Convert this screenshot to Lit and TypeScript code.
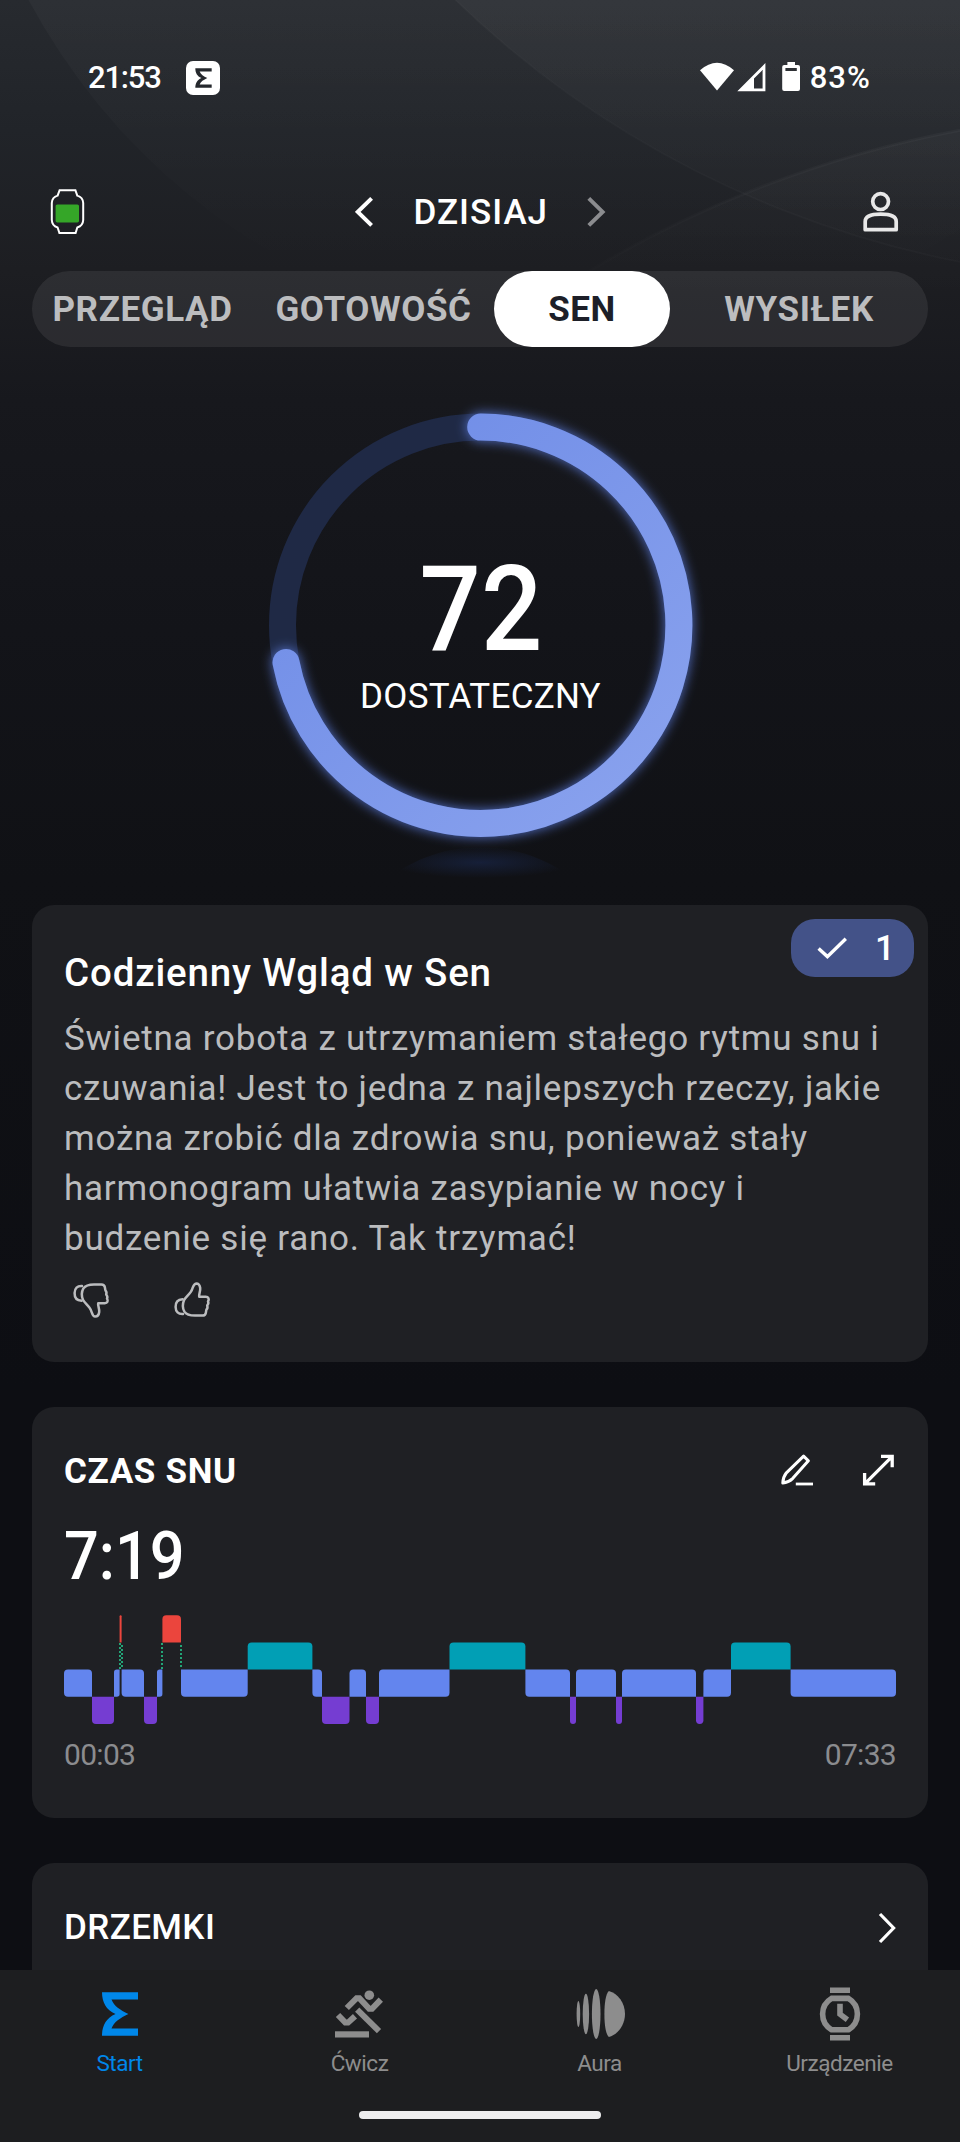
import { LitElement, html, svg, css } from "lit";
import { customElement, property } from "lit/decorators.js";
import { classMap } from "lit/directives/class-map.js";

type Stage = "awake" | "rem" | "light" | "deep";
interface Segment { stage: Stage; start: number; end: number; }

const LEVEL: Record<Stage, number> = { awake: 0, rem: 1, light: 2, deep: 3 };
const COLOR: Record<Stage, string> = { awake: "#eb453d", rem: "#019fb5", light: "#6385ee", deep: "#753dd2" };

const run = (start: number, ...parts: [Stage, number][]): Segment[] => {
  let from = start;
  return parts.map(([stage, end]) => {
    const seg = { stage, start: from, end };
    from = end;
    return seg;
  });
};

const NIGHT = run(0,
  ["light", 28], ["deep", 50], ["light", 55.6], ["awake", 57.6], ["light", 80], ["deep", 93],
  ["light", 98.4], ["awake", 117], ["light", 183.7], ["rem", 248.4], ["light", 258], ["deep", 285.5],
  ["light", 302], ["deep", 315], ["light", 385.5], ["rem", 461.4], ["light", 506], ["deep", 512],
  ["light", 552], ["deep", 558], ["light", 632], ["deep", 639.4], ["light", 667], ["rem", 726.6], ["light", 832]);

@customElement("sleep-chart")
export class SleepChart extends LitElement {
  @property({ attribute: false }) segments: Segment[] = [];
  static styles = css`
    :host { display: block; }
    .chart { display: block; width: 832px; height: 109px; }
  `;

  private block(seg: Segment, i: number) {
    const row = 27.2;
    const top = LEVEL[seg.stage] * row + 0.2;
    const x0 = seg.start, x1 = seg.end, y0 = top, y1 = top + row;
    const r = Math.min(4, (x1 - x0) / 2);
    const corner = (n: Segment | undefined, upper: boolean) => {
      if (!n) return r;
      const above = LEVEL[n.stage] < LEVEL[seg.stage];
      return above === upper ? 0 : r;
    };
    const prev = this.segments[i - 1], next = this.segments[i + 1];
    const tl = corner(prev, true), bl = corner(prev, false);
    const tr = corner(next, true), br = corner(next, false);
    return svg`<path fill=${COLOR[seg.stage]} d="M${x0 + tl} ${y0}H${x1 - tr}Q${x1} ${y0} ${x1} ${y0 + tr}V${y1 - br}Q${x1} ${y1} ${x1 - br} ${y1}H${x0 + bl}Q${x0} ${y1} ${x0} ${y1 - bl}V${y0 + tl}Q${x0} ${y0} ${x0 + tl} ${y0}Z"/>`;
  }

  private dots(x: number, shift: number) {
    return svg`<line x1=${x} x2=${x} y1=${28 + shift} y2="54" stroke="#22a577" stroke-width="2" stroke-dasharray="2 2"/>`;
  }

  render() {
    return html`<svg class="chart" viewBox="0 0 832 109">
      ${this.segments.map((s, i) => this.block(s, i))}
      ${this.dots(56, 0)}${this.dots(58, 2)}${this.dots(98, 0)}${this.dots(117, 2)}
    </svg>`;
  }
}

@customElement("score-ring")
export class ScoreRing extends LitElement {
  @property({ type: Number }) score = 0;
  @property() label = "";
  static styles = css`
    :host { display: grid; justify-content: center; height: 558px; }
    .dial, .text { grid-area: 1 / 1; }
    .dial { display: block; width: 480px; height: 558px; }
    .text { display: flex; flex-direction: column; align-items: center; padding-top: 204px; color: #fff; }
    .score { padding-left: 3px; font-size: 118px; line-height: 118px; font-weight: 500; transform: scaleX(0.915); }
    .label { margin-top: 6px; padding-left: 1px; font-size: 35px; line-height: 44px; letter-spacing: 0.25px; }
  `;
  render() {
    const r = 198.2, cx = 240.7, cy = 278.3;
    const a = (this.score / 100) * 2 * Math.PI;
    const ex = cx + r * Math.sin(a), ey = cy - r * Math.cos(a);
    const arc = `M${cx} ${cy - r}A${r} ${r} 0 1 1 ${ex} ${ey}`;
    return html`
      <svg class="dial" viewBox="0 0 480 558">
        <defs>
          <linearGradient id="arc" gradientUnits="userSpaceOnUse" x1="90" y1="120" x2="390" y2="430">
            <stop offset="0" stop-color="#708de7"/><stop offset="1" stop-color="#87a0ed"/>
          </linearGradient>
          <radialGradient id="pool"><stop offset="0" stop-color="#182444" stop-opacity=".75"/><stop offset="1" stop-color="#182444" stop-opacity="0"/></radialGradient>
          <filter id="glow" x="-20%" y="-20%" width="140%" height="140%"><feGaussianBlur stdDeviation="6"/></filter>
        </defs>
        <path d="M148 531C175 512 205 500 240.7 500S306 512 333 531Z" fill="url(#pool)"/>
        <circle cx=${cx} cy=${cy} r=${r} fill="none" stroke="#1f2945" stroke-width="27"/>
        <path d=${arc} fill="none" stroke="#5f80e6" stroke-opacity=".8" stroke-width="28" stroke-linecap="round" filter="url(#glow)"/>
        <path d=${arc} fill="none" stroke="url(#arc)" stroke-width="27" stroke-linecap="round"/>
      </svg>
      <div class="text"><div class="score">${this.score}</div><div class="label">${this.label}</div></div>`;
  }
}

const sigma = (cls: string) => html`<svg class=${cls} viewBox="102 1992 36 44"><path fill="currentColor" d="M102 1992.3H138V1999.5H111.5C114 2006 120 2010 128.4 2014C120 2018 114 2022 111.5 2028.5H138V2035.7H102C102 2026 106 2018 115.5 2014C106 2010 102 2002 102 1992.3Z"/></svg>`;

const runner = html`<svg class="nav-icon" viewBox="332 1986 56 56" fill="none" stroke="currentColor" stroke-width="6">
  <circle cx="369.3" cy="1995.2" r="4.8" fill="currentColor" stroke="none"/>
  <path d="M346.8 2008L356.6 1998.2H359.4L369.2 2008.8H372L380.8 1999.6"/>
  <path d="M357.2 2009.6L379 2031.2"/>
  <path d="M338 2015L345.3 2022.6H348L355 2016.2"/>
  <rect x="335" y="2031.3" width="34" height="6.2" fill="currentColor" stroke="none"/></svg>`;

const aura = html`<svg class="nav-icon" viewBox="572 1986 56 56" fill="currentColor">
  <ellipse cx="578.4" cy="2014" rx="1.8" ry="13"/><ellipse cx="585.9" cy="2014" rx="3.2" ry="20.3"/><ellipse cx="596.2" cy="2014" rx="4.3" ry="25"/>
  <path d="M608.8 1991C618 1993.5 625 2003 625 2014S618 2034.5 608.8 2037C605.6 2034 604.4 2024 604.4 2014S605.6 1994 608.8 1991Z"/></svg>`;

const watch = html`<svg class="nav-icon" viewBox="812 1986 56 56" fill="none" stroke="currentColor" stroke-width="5.6">
  <path d="M830 1990.3H850M830 2037.8H850"/>
  <path d="M831.6 1998.4H848.4A18.2 18.2 0 0 1 848.4 2029.8H831.6A18.2 18.2 0 0 1 831.6 1998.4Z"/>
  <path d="M840 2003.8V2014.2L847.4 2019.8"/></svg>`;

const TABS = [
  { text: "PRZEGLĄD", on: false }, { text: "GOTOWOŚĆ", on: false },
  { text: "SEN", on: true }, { text: "WYSIŁEK", on: false },
];

@customElement("app-root")
export class AppRoot extends LitElement {
  static styles = css`
    :host { display: block; width: 960px; height: 2142px; overflow: hidden; font-family: Roboto, "Noto Sans", sans-serif; color: #fff; }
    svg { display: block; flex: none; }
    .screen { position: relative; display: flex; flex-direction: column; width: 960px; height: 2142px; overflow: hidden;
      background: linear-gradient(180deg, #272a2f 0, #212429 130px, #1d1e22 270px, #17181d 400px, #131419 630px, #101115 880px, #0d0e13 1390px, #0d0e13 100%); }
    .arcs { position: absolute; inset: 0 auto auto 0; width: 960px; height: 360px; }
    .content { position: relative; display: flex; flex-direction: column; height: 1970px; overflow: hidden; }
    .status { display: flex; align-items: center; height: 154px; padding: 0 89px 0 88px; flex: none; }
    .clock { padding-top: 2px; font-size: 31px; line-height: 36px; font-weight: 500; letter-spacing: -1.2px; width: 98px; }
    .chip { display: grid; place-items: center; width: 34px; height: 34px; margin-top: 2px; border-radius: 7px; background: #fff; color: #25282d; }
    .sys { display: flex; align-items: center; margin-left: auto; }
    .pct { padding-top: 2px; font-size: 31px; line-height: 36px; font-weight: 500; letter-spacing: 1.1px; }
    .top { display: grid; grid-template-columns: 1fr auto 1fr; align-items: center; height: 115px; margin-bottom: 2px; padding: 0 49px 0 50px; flex: none; }
    .day { display: flex; align-items: center; }
    .date { width: 134px; margin: 0 39px; padding-top: 2px; font-size: 35px; line-height: 44px; font-weight: 500; letter-spacing: 1px; white-space: nowrap; }
    .me { justify-self: end; margin-right: 12px; }
    .tabs { display: grid; grid-template-columns: 221px 241px 176px 258px; height: 76px; margin: 0 32px; border-radius: 38px; background: rgba(255,255,255,.075); flex: none; }
    .tab { display: grid; place-items: center; padding-top: 2px; border-radius: 38px; font-size: 35px; line-height: 44px; font-weight: 700; letter-spacing: 0.6px; color: #bcbdbf; }
    .tab.on { background: #fff; color: #1d1f28; }
    .card { position: relative; flex: none; margin: 0 32px; padding: 0 32px; border-radius: 22px; background: #1f2024; }
    .insight { height: 457px; box-sizing: border-box; padding-top: 44px; }
    .insight-title { font-size: 38.5px; line-height: 48px; font-weight: 500; letter-spacing: 0.84px; }
    .insight-text { margin: 17px 0 0; font-size: 35px; line-height: 50px; letter-spacing: 0.77px; color: #bbbcbe; white-space: nowrap; }
    .votes { display: flex; gap: 61px; margin: 16px 0 0 6px; }
    .badge { position: absolute; top: 14px; right: 14px; box-sizing: border-box; display: flex; align-items: center; width: 123px; height: 58px; padding-left: 26px; border-radius: 24px; background: #435288; }
    .count { margin-left: 28px; padding-top: 2px; font-size: 35px; line-height: 44px; font-weight: 500; }
    .sleep { height: 411px; box-sizing: border-box; margin-top: 45px; padding-top: 42px; }
    .naps { height: 411px; box-sizing: border-box; margin-top: 45px; padding-top: 42px; }
    .row { display: flex; align-items: center; height: 44px; }
    .heading { padding-top: 2px; font-size: 35px; line-height: 44px; font-weight: 700; letter-spacing: 0.66px; }
    .heading.medium { font-weight: 500; letter-spacing: 0.4px; }
    .tools { display: flex; gap: 46px; margin-left: auto; }
    .go { margin-left: auto; }
    .duration { margin-top: 28px; font-size: 67px; line-height: 70px; font-weight: 500; transform: scaleX(.915); transform-origin: left; }
    .chart { margin-top: 24px; }
    .times { display: flex; justify-content: space-between; margin-top: 13px; font-size: 30px; line-height: 36px; letter-spacing: -0.7px; color: #8b8c8f; }
    .nav { position: relative; height: 172px; box-sizing: border-box; padding-top: 16px; background: #1d1e20; }
    .items { display: grid; grid-template-columns: repeat(4, 1fr); }
    .item { display: flex; flex-direction: column; align-items: center; color: #8d8d8d; }
    .item.on { color: #0087e9; }
    .nav-icon { width: 56px; height: 56px; }
    .slot { display: grid; place-items: center; height: 56px; }
    .sigma { width: 36px; height: 44px; }
    .mini { width: 17px; height: 20px; }
    .caption { margin-top: 7px; padding-right: 1px; font-size: 22.5px; line-height: 28px; letter-spacing: -0.45px; }
    .handle { width: 242px; height: 8px; margin: 34px auto 0; border-radius: 4px; background: #ededee; }
  `;

  render() {
    return html`<div class="screen">
      <svg class="arcs" viewBox="0 0 960 360" fill="none">
        <defs>
          <linearGradient id="f1" gradientUnits="userSpaceOnUse" x1="0" y1="0" x2="0" y2="270"><stop offset="0" stop-color="#fff" stop-opacity=".03"/><stop offset="1" stop-color="#fff" stop-opacity="0"/></linearGradient>
          <linearGradient id="f2" gradientUnits="userSpaceOnUse" x1="0" y1="0" x2="0" y2="290"><stop offset="0" stop-color="#fff" stop-opacity=".035"/><stop offset="1" stop-color="#fff" stop-opacity="0"/></linearGradient>
          <linearGradient id="f3" gradientUnits="userSpaceOnUse" x1="0" y1="130" x2="0" y2="300"><stop offset="0" stop-color="#fff" stop-opacity=".03"/><stop offset="1" stop-color="#fff" stop-opacity="0"/></linearGradient>
        </defs>
        <circle cx="597" cy="-304" r="644.6" fill="url(#f1)"/>
        <circle cx="1151" cy="-724" r="1004" fill="url(#f2)" stroke="#fff" stroke-opacity=".02" stroke-width="2"/>
        <circle cx="1168" cy="1238" r="1127" fill="url(#f3)" stroke="url(#f3)" stroke-width="3"/>
      </svg>

      <div class="content">
        <div class="status">
          <div class="clock">21:53</div>
          <div class="chip">${sigma("mini")}</div>
          <div class="sys">
            <svg width="110" height="34" viewBox="700 60 110 34" fill="#fff">
              <path d="M700 70.2Q717 55.2 734 70.2L717 90.6Z"/>
              <path fill-rule="evenodd" d="M765.4 63V91.3H737.3ZM754 78.6V88.4H762.6V70Z"/>
              <path fill-rule="evenodd" d="M787.4 62H795V65H798Q800 65 800 67V89Q800 91 798 91H784.2Q782.2 91 782.2 89V67Q782.2 65 784.2 65H787.4ZM785.4 68V71H796.8V68Z"/>
            </svg>
            <div class="pct">83%</div>
          </div>
        </div>

        <div class="top">
          <svg width="35" height="46" viewBox="50 190 35 46" fill="none">
            <path d="M59.6 191.2H75.4L77.3 196.6Q83 198.3 83.2 204V221Q83 226.7 77.3 228.5L75.6 234H59.4L57.6 228.5Q52 226.7 51.8 221V204Q52 198.3 57.6 196.6Z" stroke="#fff" stroke-width="2"/>
            <rect x="55.6" y="205.4" width="23.4" height="18" rx="1.6" fill="#35a628"/>
          </svg>
          <div class="day">
            <svg width="20" height="34" viewBox="356 195 20 34" fill="none" stroke="#fff" stroke-width="4"><path d="M372.6 198.4L358.8 211.9L372.6 225.4"/></svg>
            <div class="date">DZISIAJ</div>
            <svg width="20" height="34" viewBox="587 195 20 34" fill="none" stroke="#8b8c8f" stroke-width="4"><path d="M588.8 198.4L602.6 211.9L588.8 225.4"/></svg>
          </div>
          <svg class="me" width="36" height="42" viewBox="864 191 36 42" fill="none" stroke="#e8e8e8" stroke-width="3.7">
            <circle cx="881.6" cy="201.6" r="7.9"/>
            <path stroke-linejoin="round" d="M866.2 229.7V221.6Q866.2 214.2 881.7 214.2T897.2 221.6V229.7Z"/>
          </svg>
        </div>

        <div class="tabs">${TABS.map(t => html`<div class=${classMap({ tab: true, on: t.on })}>${t.text}</div>`)}</div>

        <score-ring score="72" label="DOSTATECZNY"></score-ring>

        <div class="card insight">
          <div class="badge">
            <svg width="30" height="24" viewBox="817 936 30 24" fill="none" stroke="#fff" stroke-width="3.4"><path d="M818.6 948.6L827.4 956.6L845.8 938.8"/></svg>
            <div class="count">1</div>
          </div>
          <div class="insight-title">Codzienny Wgląd w Sen</div>
          <p class="insight-text">Świetna robota z utrzymaniem stałego rytmu snu i<br>czuwania! Jest to jedna z najlepszych rzeczy, jakie<br>można zrobić dla zdrowia snu, ponieważ stały<br>harmonogram ułatwia zasypianie w nocy i<br>budzenie się rano. Tak trzymać!</p>
          <div class="votes">
            ${[false, true].map(up => html`<svg width="40" height="40" viewBox="70 1280 40 40" fill="none" stroke="#bbbcbe" stroke-width="2.5" stroke-linejoin="round" stroke-linecap="round">
              <g transform=${up ? "translate(0 2600) scale(1 -1)" : "translate(0 0)"}>
                <path d="M82 1286Q74.8 1285.6 74.6 1293T81.6 1300.8"/>
                <path d="M83.4 1288.4C85.5 1285.2 89 1284.4 94 1284.4H101.5Q104.3 1284.4 104.8 1287L105.4 1290.4C106.5 1291.5 106.7 1293 106.2 1294.4C107.4 1296 107.6 1297.6 107 1298.6C108.6 1301 107.4 1303.2 104.8 1303.2H98.2C97.6 1305.5 99.6 1308.6 99.2 1312C98.8 1315.4 97 1316.6 95.2 1316.6C91.8 1316.4 92.2 1311.4 90 1308.4C87.5 1304.8 84.4 1302.6 83 1299.8C81.6 1296.4 81.6 1291.6 83.4 1288.4Z"/>
              </g></svg>`)}
          </div>
        </div>

        <div class="card sleep">
          <div class="row">
            <div class="heading">CZAS SNU</div>
            <div class="tools">
              <svg width="36" height="36" viewBox="780 1453 36 36" fill="none" stroke="#fff" stroke-width="3"><path stroke-linejoin="round" d="M782.8 1483C783 1478.5 784.2 1475.6 786.4 1472.8L803.6 1456.2L808.4 1460.8L792.6 1478.6C790 1481 787 1482.6 782.8 1483Z"/><path stroke-width="2.8" d="M795.8 1484H813"/></svg>
              <svg width="34" height="36" viewBox="862 1453 34 36" fill="none" stroke="#fff" stroke-width="3.3"><path d="M865 1483.6L892 1456.6M881 1456.4H892.2V1467.2M864.6 1473V1483.8H875.2"/></svg>
            </div>
          </div>
          <div class="duration">7:19</div>
          <sleep-chart class="chart" .segments=${NIGHT}></sleep-chart>
          <div class="times"><span>00:03</span><span>07:33</span></div>
        </div>

        <div class="card naps">
          <div class="row">
            <div class="heading medium">DRZEMKI</div>
            <svg class="go" width="20" height="34" viewBox="876 1908 20 34" fill="none" stroke="#fff" stroke-width="3.2"><path d="M880 1912L893.6 1926L880 1940"/></svg>
          </div>
        </div>
      </div>

      <div class="nav">
        <div class="items">
          <div class="item on"><div class="slot">${sigma("sigma")}</div><div class="caption">Start</div></div>
          <div class="item">${runner}<div class="caption">Ćwicz</div></div>
          <div class="item">${aura}<div class="caption">Aura</div></div>
          <div class="item">${watch}<div class="caption">Urządzenie</div></div>
        </div>
        <div class="handle"></div>
      </div>
    </div>`;
  }
}
